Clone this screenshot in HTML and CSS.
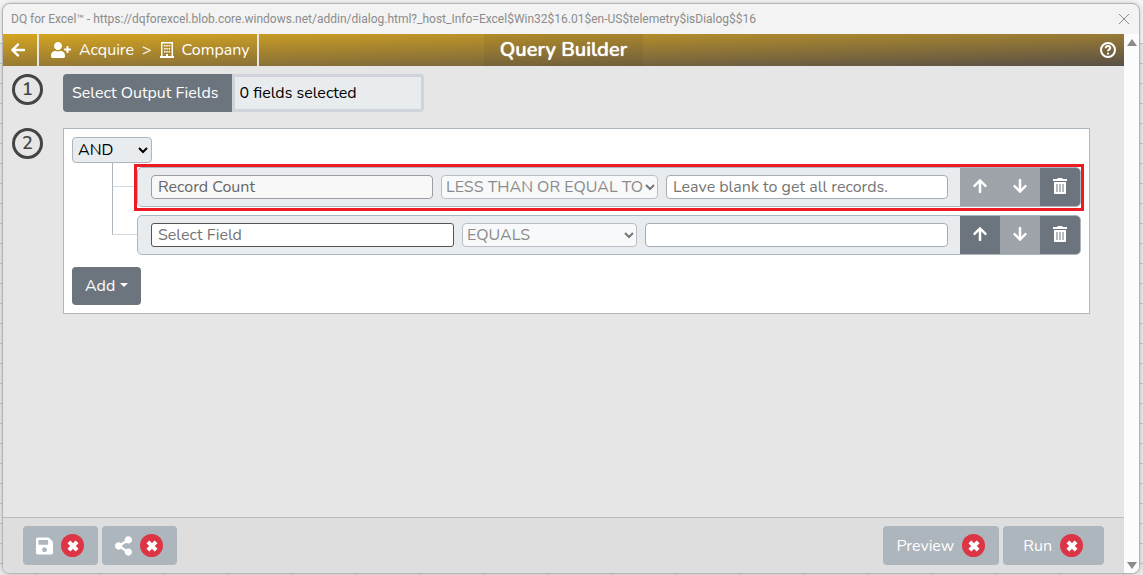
FILE: index.html
```
<!DOCTYPE html>
<html lang="en">

<head>
    <meta charset="utf-8">
    <title>DQ for Excel - Query Builder</title>
    <link rel="stylesheet" href="styles.css">
</head>

<body>
    <!-- shared icons -->
    <svg class="icon-defs" width="0" height="0" aria-hidden="true">
        <symbol id="arrow-left" viewBox="0 0 448 512">
            <path d="M257.5 445.1l-22.2 22.2c-9.4 9.4-24.6 9.4-33.9 0L7 273c-9.4-9.4-9.4-24.6 0-33.9L201.4 44.7c9.4-9.4 24.6-9.4 33.9 0l22.2 22.2c9.5 9.5 9.3 25-.4 34.3L136.6 216H424c13.3 0 24 10.7 24 24v32c0 13.3-10.7 24-24 24H136.6l120.5 114.8c9.8 9.3 10 24.8.4 34.3z" />
        </symbol>
        <symbol id="arrow-up" viewBox="0 0 448 512">
            <path d="M34.9 289.5l-22.2-22.2c-9.4-9.4-9.4-24.6 0-33.9L207 39c9.4-9.4 24.6-9.4 33.9 0l194.3 194.3c9.4 9.4 9.4 24.6 0 33.9L413 289.4c-9.5 9.5-25 9.3-34.3-.4L264 168.6V456c0 13.3-10.7 24-24 24h-32c-13.3 0-24-10.7-24-24V168.6L69.2 289.1c-9.3 9.8-24.8 10-34.3.4z" />
        </symbol>
        <symbol id="arrow-down" viewBox="0 0 448 512">
            <path transform="rotate(180 224 256)" d="M34.9 289.5l-22.2-22.2c-9.4-9.4-9.4-24.6 0-33.9L207 39c9.4-9.4 24.6-9.4 33.9 0l194.3 194.3c9.4 9.4 9.4 24.6 0 33.9L413 289.4c-9.5 9.5-25 9.3-34.3-.4L264 168.6V456c0 13.3-10.7 24-24 24h-32c-13.3 0-24-10.7-24-24V168.6L69.2 289.1c-9.3 9.8-24.8 10-34.3.4z" />
        </symbol>
        <symbol id="trash" viewBox="0 0 14 16">
            <path fill-rule="evenodd" d="M0 1h4l1-1h4l1 1h4v2H0zM1 4h12v11a1 1 0 0 1-1 1H2a1 1 0 0 1-1-1zM3.5 6v8h1V6zM6.5 6v8h1V6zM9.5 6v8h1V6z" />
        </symbol>
        <symbol id="times" viewBox="0 0 12 12">
            <path d="M2.500 2.500l7 7M9.500 2.500l-7 7" fill="none" stroke="currentColor" stroke-width="3.500" />
        </symbol>
    </svg>

    <div class="window">
        <div class="title-bar">
            <span>DQ for Excel™ - https://dqforexcel.blob.core.windows.net/addin/dialog.html?_host_Info=Excel$Win32$16.01$en-US$telemetry$isDialog$$16</span>
            <button type="button" class="close-button" aria-label="Close">
                <svg width="10" height="10" viewBox="0 0 10 10"><path d="M0 0l10 10M10 0L0 10" /></svg>
            </button>
        </div>

        <div class="window-body">
            <div class="page">
                <header>
                    <nav>
                        <button type="button" class="back-button" aria-label="Back">
                            <svg width="14" height="16"><use href="#arrow-left" /></svg>
                        </button>
                        <div class="breadcrumb">
                            <svg width="20" height="16" viewBox="0 0 640 512">
                                <path d="M624 208h-64v-64c0-8.800-7.200-16-16-16h-32c-8.800 0-16 7.200-16 16v64h-64c-8.800 0-16 7.200-16 16v32c0 8.800 7.200 16 16 16h64v64c0 8.800 7.200 16 16 16h32c8.800 0 16-7.200 16-16v-64h64c8.800 0 16-7.200 16-16v-32c0-8.800-7.200-16-16-16zm-400 48c70.700 0 128-57.300 128-128S294.700 0 224 0 96 57.300 96 128s57.300 128 128 128zm89.600 32h-16.700c-22.200 10.200-46.900 16-72.900 16s-50.600-5.800-72.900-16h-16.700C60.200 288 0 348.200 0 422.400V464c0 26.500 21.500 48 48 48h352c26.500 0 48-21.500 48-48v-41.600c0-74.200-60.200-134.400-134.400-134.400z" />
                            </svg>
                            <a href="#acquire">Acquire</a>
                            <span>&gt;</span>
                            <svg width="14" height="16" viewBox="0 0 14 16">
                                <path fill-rule="evenodd" d="M1 0h12v14h1v2H0v-2h1zM2.500 1.500V14H6v-2h2v2h3.500V1.500z" />
                                <path d="M4 3h1.500v1.500H4zM6.300 3h1.500v1.500H6.300zM8.600 3h1.500v1.500H8.600zM4 6h1.500v1.500H4zM6.300 6h1.500v1.500H6.300zM8.600 6h1.500v1.500H8.600zM4 9h1.500v1.500H4zM6.300 9h1.500v1.500H6.300zM8.600 9h1.500v1.500H8.600z" />
                            </svg>
                            <a href="#company">Company</a>
                        </div>
                    </nav>
                    <h1 class="title">Query Builder</h1>
                    <button type="button" class="help-button" aria-label="Help">
                        <svg width="16" height="16" viewBox="0 0 16 16">
                            <circle cx="8" cy="8" r="7" />
                            <path d="M5.700 6.200C5.900 3.200 10.400 3.500 10.200 6.100C10.100 7.500 8 7.700 8 9.300M8 10.800v1.800" />
                        </svg>
                    </button>
                </header>

                <main>
                    <div class="step">
                        <span class="step-number">1</span>
                        <div class="output-fields">
                            <button type="button" class="btn">Select Output Fields</button>
                            <input type="text" value="0 fields selected" aria-label="Selected output fields" readonly>
                        </div>
                    </div>

                    <div class="step">
                        <span class="step-number">2</span>
                        <div class="query-panel">
                            <select class="operator" aria-label="Group operator">
                                <option>AND</option>
                                <option>OR</option>
                            </select>

                            <ul class="rules">
                                <li>
                                    <span class="branch"></span>
                                    <div class="highlight">
                                        <div class="rule">
                                            <div class="rule-fields">
                                                <input type="text" class="field-locked" value="Record Count" aria-label="Field" readonly>
                                                <select class="compare-wide" aria-label="Comparison" disabled>
                                                    <option>LESS THAN OR EQUAL TO</option>
                                                </select>
                                                <input type="text" placeholder="Leave blank to get all records." aria-label="Value">
                                            </div>
                                            <button type="button" aria-label="Move up" disabled><svg width="14" height="16"><use href="#arrow-up" /></svg></button>
                                            <button type="button" aria-label="Move down" disabled><svg width="14" height="16"><use href="#arrow-down" /></svg></button>
                                            <button type="button" aria-label="Delete"><svg width="14" height="16"><use href="#trash" /></svg></button>
                                        </div>
                                    </div>
                                </li>
                                <li>
                                    <span class="branch branch-last"></span>
                                    <div class="rule">
                                        <div class="rule-fields">
                                            <input type="text" class="field-picker" placeholder="Select Field" aria-label="Field">
                                            <select aria-label="Comparison" disabled>
                                                <option>EQUALS</option>
                                            </select>
                                            <input type="text" aria-label="Value">
                                        </div>
                                        <button type="button" aria-label="Move up"><svg width="14" height="16"><use href="#arrow-up" /></svg></button>
                                        <button type="button" aria-label="Move down" disabled><svg width="14" height="16"><use href="#arrow-down" /></svg></button>
                                        <button type="button" aria-label="Delete"><svg width="14" height="16"><use href="#trash" /></svg></button>
                                    </div>
                                </li>
                            </ul>

                            <button type="button" class="btn add-button">Add</button>
                        </div>
                    </div>
                </main>

                <footer>
                    <button type="button" class="action" aria-label="Save">
                        <svg width="17" height="20" viewBox="0 0 448 512">
                            <path d="M433.941 129.941l-83.882-83.882A48 48 0 0 0 316.118 32H48C21.490 32 0 53.490 0 80v352c0 26.510 21.490 48 48 48h352c26.510 0 48-21.490 48-48V163.882a48 48 0 0 0-14.059-33.941zM224 416c-35.346 0-64-28.654-64-64 0-35.346 28.654-64 64-64s64 28.654 64 64c0 35.346-28.654 64-64 64zm96-304.520V212c0 6.627-5.373 12-12 12H76c-6.627 0-12-5.373-12-12V108c0-6.627 5.373-12 12-12h228.520c3.183 0 6.235 1.264 8.485 3.515l3.480 3.480A11.996 11.996 0 0 1 320 111.480z" />
                        </svg>
                        <span class="badge"><svg width="14" height="14"><use href="#times" /></svg></span>
                    </button>
                    <button type="button" class="action" aria-label="Share">
                        <svg width="17" height="20" viewBox="0 0 448 512">
                            <path d="M352 320c-22.608 0-43.387 7.819-59.790 20.895l-102.486-64.054a96.551 96.551 0 0 0 0-41.683l102.486-64.054C308.613 184.181 329.392 192 352 192c53.019 0 96-42.981 96-96S405.019 0 352 0s-96 42.981-96 96c0 7.158.790 14.130 2.276 20.841L155.790 180.895C139.387 167.819 118.608 160 96 160c-53.019 0-96 42.981-96 96s42.981 96 96 96c22.608 0 43.387-7.819 59.790-20.895l102.486 64.054A96.301 96.301 0 0 0 256 416c0 53.019 42.981 96 96 96s96-42.981 96-96-42.981-96-96-96z" />
                        </svg>
                        <span class="badge"><svg width="14" height="14"><use href="#times" /></svg></span>
                    </button>
                    <button type="button" class="action action-preview">
                        Preview
                        <span class="badge"><svg width="14" height="14"><use href="#times" /></svg></span>
                    </button>
                    <button type="button" class="action action-run">
                        Run
                        <span class="badge"><svg width="14" height="14"><use href="#times" /></svg></span>
                    </button>
                </footer>
            </div>

            <div class="scrollbar">
                <svg width="10" height="7" viewBox="0 0 10 7"><path d="M5 0l5 7H0z" /></svg>
                <svg width="10" height="7" viewBox="0 0 10 7"><path d="M0 0h10L5 7z" /></svg>
            </div>
        </div>
    </div>
</body>

</html>
```
FILE: styles.css
```
* {
    box-sizing: border-box;
}

/* spreadsheet grid behind the dialog */
body {
    margin: 0;
    height: 100vh;
    padding: 3px 3px 1px 2px;
    display: flex;
    background-color: #e8e8e8;
    background-image: linear-gradient(#f4f4f4, #f4f4f4),
        repeating-linear-gradient(to bottom, transparent 0, transparent 3px, #c4c4c4 3px, #c4c4c4 4px, transparent 4px, transparent 20px),
        repeating-linear-gradient(to right, transparent 0, transparent 35px, #c4c4c4 35px, #c4c4c4 36px, transparent 36px, transparent 64px);
    background-size: 100% 43px, auto, auto;
    background-repeat: no-repeat, repeat, repeat;
    font-family: Nunito, Lato, sans-serif;
    font-size: 16px;
    line-height: 24px;
}

button,
input,
select {
    font-family: inherit;
    font-size: 16px;
}

button {
    border: none;
    padding: 0;
    color: #fff;
    cursor: pointer;
}

svg {
    fill: currentColor;
    flex: none;
    display: block;
}

.icon-defs {
    position: absolute;
}

.window {
    flex: 1;
    display: flex;
    flex-direction: column;
    border: 1px solid #b4b4b4;
    border-radius: 8px;
    overflow: hidden;
    background-color: #f3f3f3;
    box-shadow: 0 0 4px rgba(0, 0, 0, 0.2);
}

.title-bar {
    height: 30px;
    padding: 0 10px 0 8px;
    display: flex;
    justify-content: space-between;
    align-items: center;
    color: #8c8c8c;
    font-family: "Segoe UI", Roboto, sans-serif;
    font-size: 12px;
    white-space: nowrap;
}

.close-button {
    background: none;
}

.close-button svg {
    stroke: #8c8c8c;
}

.window-body {
    flex: 1;
    display: flex;
}

.page {
    flex: 1;
    display: flex;
    flex-direction: column;
    background-color: #e6e6e6;
}

.scrollbar {
    width: 15px;
    padding: 5px 0 4px;
    display: flex;
    flex-direction: column;
    justify-content: space-between;
    align-items: center;
    background-color: #fcfcfc;
    color: #8b8b8b;
}

header {
    height: 32px;
    display: grid;
    grid-template-columns: 1fr auto 1fr;
    background-image: linear-gradient(to bottom right, #d6a520, #595047);
    color: #fff;
}

nav {
    display: flex;
}

.back-button {
    width: 36px;
    padding-left: 8px;
    background: none;
    border-right: 2px solid #e6e6e6;
}

.breadcrumb {
    display: flex;
    align-items: center;
    gap: 8px;
    padding: 0 8px 0 12px;
    border-right: 2px solid #e6e6e6;
}

.breadcrumb a {
    color: #fff;
    text-decoration: none;
}

.title {
    margin: 0;
    padding: 0 16px;
    background-color: rgba(80, 70, 50, 0.1);
    font-size: 20px;
    font-weight: 600;
    line-height: 32px;
    text-shadow: 0 0 1px #fff;
}

.help-button {
    justify-self: end;
    padding-right: 8px;
    background: none;
}

.help-button svg {
    fill: none;
    stroke: currentColor;
    stroke-width: 2;
}

main {
    flex: 1;
    display: flex;
    flex-direction: column;
    gap: 16px;
    padding: 8px 34px 8px 9px;
}

.step {
    display: flex;
    gap: 20px;
}

.step-number {
    flex: none;
    width: 31px;
    height: 31px;
    border: 3px solid #444;
    border-radius: 50%;
    color: #444;
    font-size: 18px;
    font-weight: 600;
    text-align: center;
}

.btn {
    height: 38px;
    border-radius: 4px;
    background-color: #6c757d;
}

.output-fields {
    display: flex;
}

.output-fields .btn {
    padding: 0 13px 0 9px;
    border-radius: 4px 0 0 4px;
}

.output-fields input {
    width: 192px;
    padding: 0 5px;
    border: 3px solid #ced4da;
    border-radius: 0 4px 4px 0;
    background-color: #e9ecef;
}

.query-panel {
    flex: 1;
    padding: 8px;
    border: 1px solid #adb5bd;
    background-color: #fff;
}

.operator {
    display: block;
    width: 80px;
    height: 26px;
    padding: 0 1px;
    border: 1px solid #adb5bd;
    border-radius: 4px;
    background-color: #e9ecef;
}

.rules {
    list-style: none;
    margin: 0 0 12px 40px;
    padding: 0;
}

.rules li {
    display: flex;
}

/* tree lines from the operator to each rule */
.branch {
    flex: none;
    width: 25px;
    border-left: 1px solid #adb5bd;
    background: linear-gradient(#d5d8db, #d5d8db) 0 23px / 100% 1px no-repeat;
}

.branch-last {
    height: 27px;
    background: none;
    border-bottom: 1px solid #d5d8db;
}

.highlight {
    flex: 1;
    margin-top: 4px;
    padding-bottom: 1px;
    outline: 3px solid #ed1c24;
}

.rule {
    flex: 1;
    display: flex;
    height: 40px;
    border: 1px solid #adb5bd;
    border-radius: 5px;
    overflow: hidden;
    background-color: #e9ecef;
}

.branch-last + .rule {
    margin-top: 7px;
}

.rule-fields {
    flex: 1;
    display: flex;
    align-items: center;
    gap: 8px;
    padding: 0 12px 0 13px;
}

.rule-fields input {
    flex: 1;
    min-width: 0;
    height: 24px;
    padding: 0 6px;
    border: 1px solid #a3acb5;
    border-radius: 4px;
    background-color: #fff;
    color: #666;
}

.rule-fields input::placeholder {
    color: #757575;
}

.rule-fields .field-locked {
    border-color: #9a9ea2;
    background-color: #f8f8f8;
}

.rule-fields .field-picker {
    border-color: #555;
    border-radius: 3px;
}

.rule-fields select {
    appearance: none;
    width: 175px;
    height: 24px;
    padding: 0 4px 1px;
    border: 1px solid #b8bfc6;
    border-radius: 4px;
    background: #f8f9fa url("data:image/svg+xml,%3Csvg xmlns='http://www.w3.org/2000/svg' width='10' height='7'%3E%3Cpath d='M1 1l4 4 4-4' fill='none' stroke='%23777' stroke-width='2'/%3E%3C/svg%3E") right 2px center no-repeat;
    color: #8b8b8b;
    opacity: 1;
}

.rule-fields .compare-wide {
    width: 217px;
}

.rule > button {
    width: 40px;
    padding-bottom: 2px;
    display: flex;
    justify-content: center;
    align-items: center;
    background-color: #6c757d;
}

.rule > button:disabled {
    background-color: #9fa4aa;
}

.add-button {
    padding: 0 13px;
}

.add-button::after {
    content: "";
    display: inline-block;
    margin-left: 5px;
    vertical-align: 4px;
    border-top: 4px solid;
    border-left: 4px solid transparent;
    border-right: 4px solid transparent;
}

footer {
    display: flex;
    gap: 4px;
    padding: 8px 20px;
    border-top: 1px solid #bcbcbc;
    background-color: #dedede;
}

.action {
    height: 39px;
    padding: 0 14px 0 13px;
    display: flex;
    align-items: center;
    gap: 8px;
    border-radius: 4px;
    background-color: #adb5bd;
}

.action-preview {
    margin-left: auto;
}

.action-run {
    padding: 0 21px 0 20px;
}

.badge {
    width: 23px;
    height: 23px;
    display: flex;
    justify-content: center;
    align-items: center;
    border-radius: 50%;
    background-color: #dc3545;
}
```
